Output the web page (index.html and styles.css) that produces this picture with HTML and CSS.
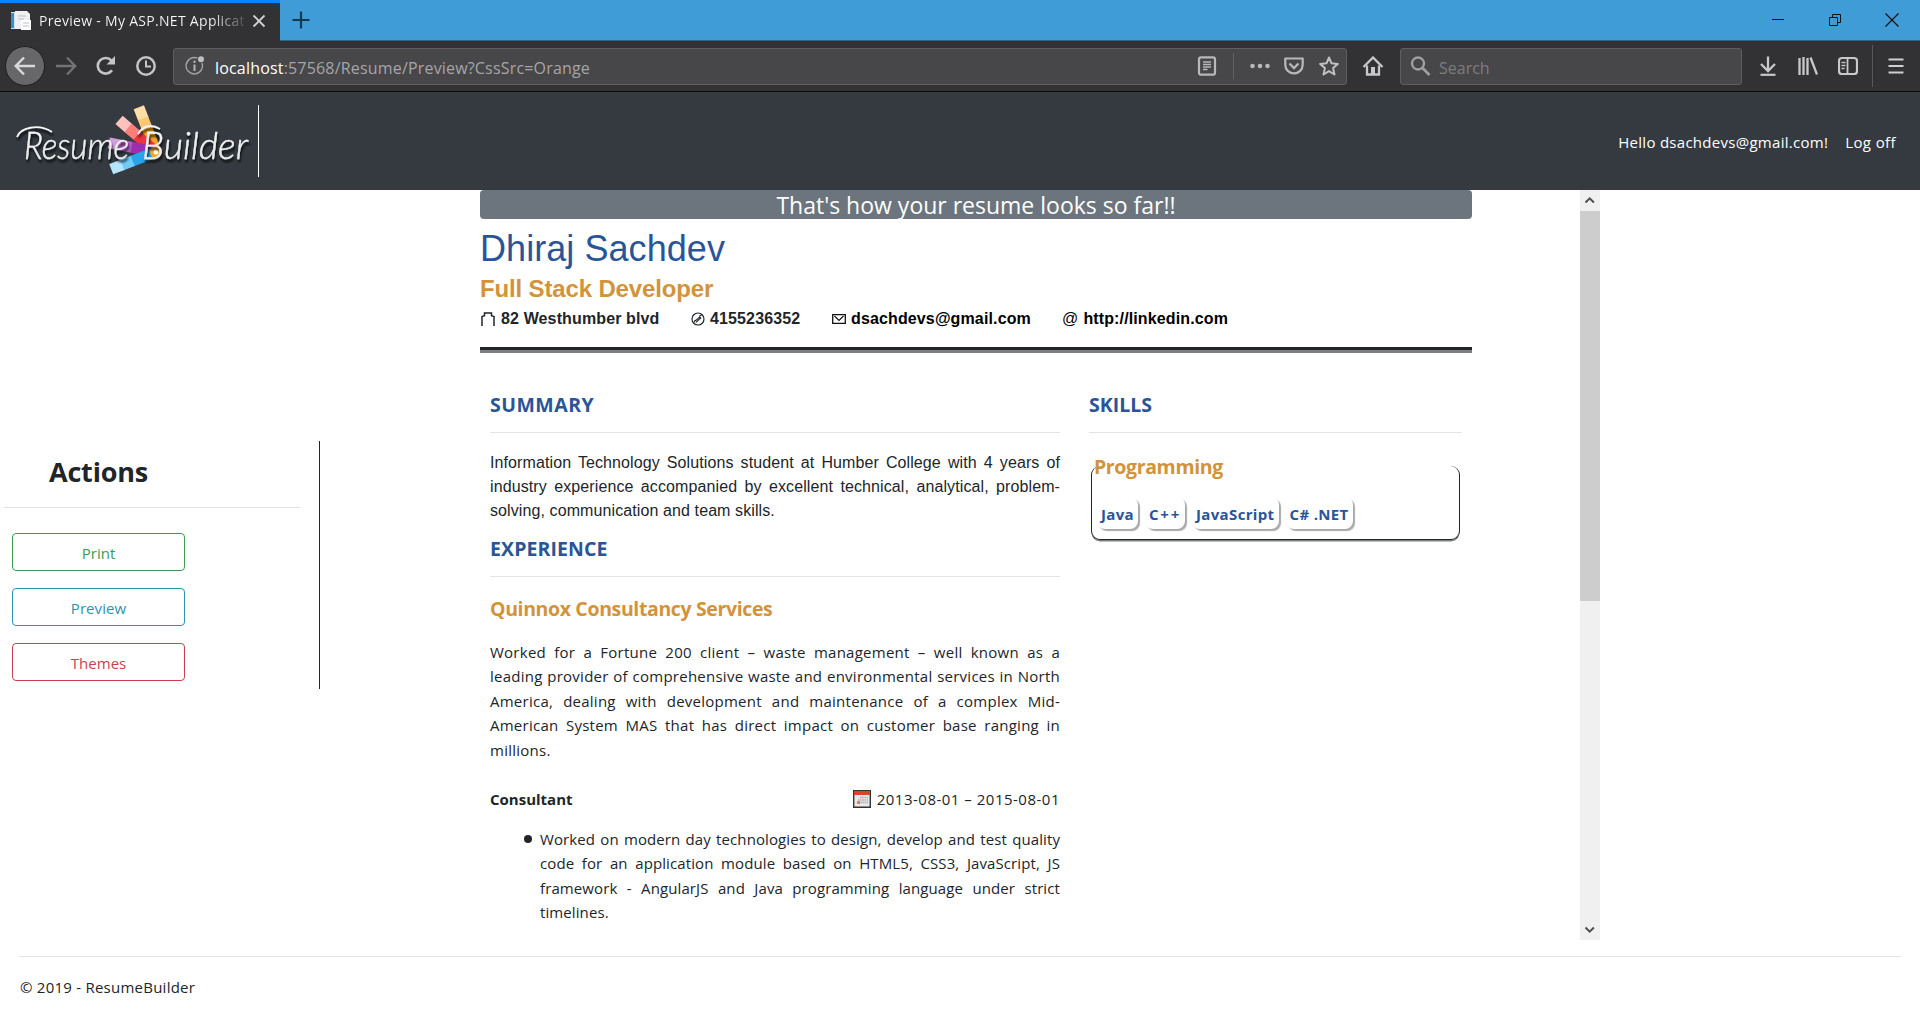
FILE: index.html
```html
<!DOCTYPE html>
<html lang="en">
<head>
<meta charset="utf-8">
<title>Preview - My ASP.NET Application</title>
<link rel="stylesheet" href="styles.css">
</head>
<body>
<header class="browser">
  <div class="titlebar">
    <div class="tab">
      <svg class="favicon" width="22" height="22" viewBox="0 0 22 22"><path d="M1 2h13v17H1z" fill="#cfe3f2"/><path d="M1 3h3v15H1z" fill="#3a8ec9"/><path d="M5 1h12l3 3v15H5z" fill="#eef0f1"/><path d="M11 10h10v10H11z" fill="#fff"/><path d="M8 6h8M8 9h6M13 13h6M13 16h6" stroke="#bcc3c8"/></svg>
      <span class="tab-title">Preview - My ASP.NET Applicat</span>
      <svg class="tab-close" width="14" height="14" viewBox="0 0 14 14"><path d="M1.500 1.500l11 11M12.500 1.500l-11 11" stroke="#d2d2d4" stroke-width="1.800"/></svg>
    </div>
    <svg class="newtab" width="18" height="18" viewBox="0 0 18 18"><path d="M9 .5v17M.5 9h17" stroke="#14384f" stroke-width="2.200"/></svg>
    <div class="window-buttons">
      <svg width="14" height="14" viewBox="0 0 14 14"><path d="M1 6.500h12" stroke="#111"/></svg>
      <svg width="14" height="14" viewBox="0 0 14 14"><path d="M1.500 4.500h8v8h-8zM4.500 4.500v-3h8v8h-3" fill="none" stroke="#111"/></svg>
      <svg width="14" height="14" viewBox="0 0 14 14"><path d="M.5 .5l13 13M13.500 .5l-13 13" stroke="#111" stroke-width="1.200"/></svg>
    </div>
  </div>
  <div class="toolbar">
    <span class="back"><svg width="22" height="20" viewBox="0 0 22 20"><path d="M21 10H2M10 1.500L1.800 10l8.200 8.500" fill="none" stroke="#d8d8da" stroke-width="2.500"/></svg></span>
    <svg class="fwd" width="22" height="20" viewBox="0 0 22 20"><path d="M1 10h19M12 1.500l8.200 8.500-8.200 8.500" fill="none" stroke="#737375" stroke-width="2.300"/></svg>
    <svg class="reload" width="22" height="20" viewBox="0 0 22 20"><path d="M17 14.200a7.800 7.800 0 1 1-.5-9.500" fill="none" stroke="#c4c4c6" stroke-width="2.600"/><path d="M20 0v8.500h-8.500z" fill="#c4c4c6"/></svg>
    <svg class="history" width="22" height="20" viewBox="0 0 22 20"><circle cx="11" cy="10" r="8.700" fill="none" stroke="#c4c4c6" stroke-width="2.500"/><path d="M11 4.500V10.500h5" fill="none" stroke="#c4c4c6" stroke-width="2"/></svg>
    <div class="field url">
      <svg class="info" width="20" height="20" viewBox="0 0 20 20"><path d="M12.500 2.200A8.200 8.200 0 1 0 17 7" fill="none" stroke="#a4a4a6" stroke-width="1.400"/><circle cx="16" cy="3.200" r="3" fill="#c0c0c2"/><path d="M9.500 8.500v6.500" stroke="#b4b4b6" stroke-width="2"/><circle cx="9.500" cy="5.800" r="1.200" fill="#b4b4b6"/></svg>
      <span class="address"><i>localhost</i>:57568/Resume/Preview?CssSrc=Orange</span>
      <svg class="reader" width="20" height="20" viewBox="0 0 20 20"><rect x="2" y="1.300" width="16" height="17.400" rx="2" fill="none" stroke="#b8b8ba" stroke-width="2.200"/><path d="M6 6h8M6 8.500h8M6 11h8M6 13.500h4.500" stroke="#b8b8ba" stroke-width="1.300"/></svg>
      <i class="divider"></i>
      <svg class="dots" width="20" height="20" viewBox="0 0 20 20"><circle cx="2.500" cy="10" r="2.300"/><circle cx="10" cy="10" r="2.300"/><circle cx="17.500" cy="10" r="2.300"/></svg>
      <svg class="pocket" width="20" height="20" viewBox="0 0 20 20"><path d="M1.300 2.500h17.400v6.200a8.700 8.700 0 0 1-17.400 0z" fill="none" stroke="#b8b8ba" stroke-width="2.200" stroke-linejoin="round"/><path d="M5.500 7.500l4.500 4.500 4.500-4.500" fill="none" stroke="#b8b8ba" stroke-width="2.300"/></svg>
      <svg class="star" width="20" height="20" viewBox="0 0 20 20"><path d="M10 1.500l2.500 5.800 6.300.6-4.700 4.200 1.400 6.400-5.500-3.400-5.500 3.400 1.400-6.400-4.700-4.200 6.300-.6z" fill="none" stroke="#c0c0c2" stroke-width="2" stroke-linejoin="round"/></svg>
    </div>
    <svg class="home" width="22" height="20" viewBox="0 0 22 20"><path d="M1.500 11L11 1.500l9.500 9.500" fill="none" stroke="#c8c8ca" stroke-width="2.300"/><path d="M5 9.500V18.500h12V9.500" fill="none" stroke="#c8c8ca" stroke-width="2.300"/><path d="M9 18v-7h4v7z" fill="#c8c8ca"/></svg>
    <div class="field search">
      <svg width="22" height="20" viewBox="0 0 22 20"><circle cx="8" cy="7.500" r="6" fill="none" stroke="#a0a0a2" stroke-width="2.300"/><path d="M12.500 12l7 7" stroke="#a0a0a2" stroke-width="2.600"/></svg>
      <span>Search</span>
    </div>
    <svg class="download" width="20" height="20" viewBox="0 0 20 20"><path d="M10 .5v14M3 8l7 7 7-7" fill="none" stroke="#c8c8ca" stroke-width="2.300"/><path d="M2.500 18.800h15" stroke="#c8c8ca" stroke-width="2.200"/></svg>
    <svg class="library" width="20" height="20" viewBox="0 0 20 20"><path d="M1.500 2v17M5.500 1v18M9.500 2v17M12.500 1.500l6.500 17" stroke="#c8c8ca" stroke-width="2.300"/></svg>
    <svg class="sidebar-icon" width="20" height="20" viewBox="0 0 20 20"><rect x="1" y="2" width="18" height="16" rx="3" fill="none" stroke="#c8c8ca" stroke-width="2.200"/><path d="M9.500 2v16" stroke="#c8c8ca" stroke-width="1.800"/><path d="M3.500 6.500h4M3.500 9.500h4M3.500 12.500h3" stroke="#c8c8ca" stroke-width="1.400"/></svg>
    <i class="tool-divider"></i>
    <svg class="menu" width="16" height="20" viewBox="0 0 16 20"><path d="M.5 3.500h15M.5 10h15M.5 16.500h15" stroke="#d0d0d2" stroke-width="2.200"/></svg>
  </div>
</header>

<nav class="navbar">
  <svg class="logo" width="258" height="72" viewBox="0 0 258 72">
    <defs>
      <linearGradient id="metal" x1="0" y1="0" x2="0" y2="1"><stop offset="0" stop-color="#fff"/><stop offset="1" stop-color="#dcdfe2"/></linearGradient>
      <filter id="drop" x="-10%" y="-20%" width="120%" height="150%"><feDropShadow dx="1" dy="3" stdDeviation="1.300" flood-color="#000" flood-opacity=".8"/></filter>
    </defs>
    <g transform="translate(156 47)">
      <g transform="rotate(-21)"><path d="M-5.500-48h11v13h-11z" fill="#ffdda6"/><path d="M-5.500-36h11v12h-11z" fill="#ffc673"/><path d="M-5.500-25h11V3h-11z" fill="#f5a623"/></g>
      <g transform="rotate(-49)"><path d="M-5.500-49h11v13h-11z" fill="#ffc2bd"/><path d="M-5.500-37h11v14h-11z" fill="#ff7f78"/><path d="M-5.500-25h11V0h-11z" fill="#ea3540"/></g>
      <g transform="rotate(-79)"><path d="M-5.500-48h11v13h-11z" fill="#cfa0dc"/><path d="M-5.500-36h11v12h-11z" fill="#b45bc6"/><path d="M-5.500-25h11V0h-11z" fill="#9b2fae"/></g>
      <g transform="rotate(-111)"><path d="M-5.500-48h11v13h-11z" fill="#b5e5ff"/><path d="M-5.500-36h11v12h-11z" fill="#6fcbfa"/><path d="M-5.500-25h11V0h-11z" fill="#29a4ea"/></g>
      <circle r="6" fill="#f5a623"/><circle r="2.500" fill="#fff"/>
    </g>
    <g filter="url(#drop)" fill="url(#metal)" stroke="#f4f5f6" stroke-width=".4">
      <text class="logo-text" x="24" y="54" textLength="105" lengthAdjust="spacingAndGlyphs">Resume</text>
      <text class="logo-text" x="142" y="54" textLength="106" lengthAdjust="spacingAndGlyphs">Builder</text>
      <path d="M17 32C20 23 38 18 52 27M138 29C143 20 152 19 160 24" fill="none" stroke-width="1.800"/>
    </g>
  </svg>
  <div class="account"><span class="hello">Hello dsachdevs@gmail.com!</span><span class="logoff">Log off</span></div>
</nav>

<main class="page">
  <aside class="actions">
    <h2>Actions</h2>
    <button class="print">Print</button>
    <button class="preview">Preview</button>
    <button class="themes">Themes</button>
  </aside>
  <section class="scroller">
    <article class="resume">
      <div class="banner">That's how your resume looks so far!!</div>
      <h1>Dhiraj Sachdev</h1>
      <h2 class="role">Full Stack Developer</h2>
      <div class="contact">
        <span class="c1"><svg width="16" height="14" viewBox="0 0 16 14"><path d="M2 14V4.500l2.500-.8V1h7v2.700l2.500.8V14" fill="none" stroke="#212529" stroke-width="1.500"/></svg><b>82 Westhumber blvd</b></span>
        <span class="c2"><svg width="14" height="14" viewBox="0 0 14 14"><circle cx="7" cy="7" r="6" fill="none" stroke="#212529" stroke-width="1.200"/><path d="M3.800 10.500c-.5-1.500 0-2.300 1-2.100L8.800 5c-.2-1.500.5-2 1.800-1.500M5 10.300L10.200 5.500" fill="none" stroke="#212529" stroke-width="1.100"/></svg><b>4155236352</b></span>
        <span class="c3"><svg width="14" height="10" viewBox="0 0 14 10"><path d="M.7.700h12.600v8.600H.7z" fill="none" stroke="#111" stroke-width="1.300"/><path d="M2.500 2L7 6.500 11.500 2" fill="none" stroke="#111" stroke-width="1.200"/></svg><b>dsachdevs@gmail.com</b></span>
        <span class="c4"><i>@</i><b>http://linkedin.com</b></span>
      </div>
      <div class="rule"></div>
      <div class="columns">
        <div class="left">
          <h3 class="sum">SUMMARY</h3>
          <p class="summary">Information Technology Solutions student at Humber College with 4 years of industry experience accompanied by excellent technical, analytical, problem-solving, communication and team skills.</p>
          <h3 class="exp">EXPERIENCE</h3>
          <h4>Quinnox Consultancy Services</h4>
          <p class="about">Worked for a Fortune 200 client – waste management – well known as a leading provider of comprehensive waste and environmental services in North America, dealing with development and maintenance of a complex Mid-American System MAS that has direct impact on customer base ranging in millions.</p>
          <div class="position">
            <strong>Consultant</strong>
            <span class="dates"><svg width="18" height="18" viewBox="0 0 18 18"><path d="M.7.700h16.600v16.600H.7z" fill="#e8e8e8" stroke="#333" stroke-width="1.400"/><path d="M1 1h16v4H1z" fill="#dc4326"/><path d="M7 7.500h8M5 10h10M5 12.500h10" stroke="#a8adb5" stroke-width="1.500" stroke-dasharray="1.500 .7"/><path d="M4 11h3v3H4z" fill="#e27a7a"/></svg>2013-08-01 – 2015-08-01</span>
          </div>
          <ul><li>Worked on modern day technologies to design, develop and test quality code for an application module based on HTML5, CSS3, JavaScript, JS framework - AngularJS and Java programming language under strict timelines.</li></ul>
        </div>
        <div class="right">
          <h3>SKILLS</h3>
          <div class="skillbox">
            <h4>Programming</h4>
            <div class="badges"><span>Java</span><span class="cpp">C++</span><span>JavaScript</span><span>C# .NET</span></div>
          </div>
        </div>
      </div>
    </article>
    <div class="scrollbar">
      <svg width="20" height="21" viewBox="0 0 20 21"><path d="M5.500 12.500l4.200-4.200 4.200 4.200" fill="none" stroke="#505050" stroke-width="2"/></svg>
      <div class="thumb"></div>
      <svg class="down" width="20" height="21" viewBox="0 0 20 21"><path d="M5.500 8.500l4.200 4.200 4.200-4.200" fill="none" stroke="#505050" stroke-width="2"/></svg>
    </div>
  </section>
</main>
<footer><p>© 2019 - ResumeBuilder</p></footer>
</body>
</html>
```
FILE: styles.css
```css
* { box-sizing: border-box; }
body { margin: 0; background: #fff; color: #212529; font: 15px/24px "Open Sans", sans-serif; }
b { font-weight: inherit; white-space: pre; }
i { font-style: normal; }
h1, h2, h3, h4, p, ul { margin: 0; padding: 0; }
svg { display: block; flex: none; }

.titlebar { display: flex; align-items: center; height: 41px; background: #409cd6; border-bottom: 1px solid #2d6487; }
.tab { display: flex; align-items: center; align-self: stretch; width: 280px; height: 41px; padding: 0 14px 2px 10px; background: #323234; border-top: 3px solid #0a84ff; }
.tab-title { width: 206px; margin-left: 7px; overflow: hidden; white-space: nowrap; font-size: 14px; letter-spacing: .3px; color: transparent; background: linear-gradient(90deg, #f9f9fa 84%, #4a4a4c 100%); -webkit-background-clip: text; background-clip: text; }
.tab-close { margin-left: 7px; }
.newtab { margin-left: 12px; }
.window-buttons { display: flex; gap: 43px; margin-left: auto; padding-right: 21px; }
.toolbar { display: flex; align-items: center; height: 51px; padding: 0 16px 0 5px; background: #323234; border-bottom: 1px solid #0c0c0d; }
.back { display: flex; align-items: center; justify-content: center; width: 40px; height: 40px; border-radius: 50%; background: #676769; border: 1px solid #1e1e20; }
.fwd { margin-left: 10px; }
.reload { margin-left: 18px; }
.history { margin-left: 18px; }
.field { display: flex; align-items: center; height: 37px; background: #474749; border: 1px solid #5e5e60; border-radius: 3px; }
.url { width: 1174px; margin-left: 16px; padding-left: 11px; }
.address { width: 400px; margin-left: 10px; padding-top: 4px; font-size: 16px; letter-spacing: .18px; color: #a5a5a7; }
.address i { color: #fff; }
.reader { margin-left: 582px; }
.divider { width: 1px; height: 26px; margin: 0 16px; background: #626264; }
.dots { fill: #b8b8ba; }
.pocket { margin-left: 14px; }
.star { margin-left: 15px; }
.home { margin-left: 15px; }
.search { width: 342px; margin-left: 16px; padding-left: 9px; }
.search span { margin-left: 7px; padding-top: 4px; font-size: 16px; color: #7d7d7f; }
.download { margin-left: 16px; }
.library, .sidebar-icon { margin-left: 20px; }
.tool-divider { width: 1px; height: 42px; margin: 0 15px 0 14px; background: #58585a; }

.navbar { display: flex; justify-content: space-between; height: 98px; padding: 13px 24px 0 0; background: #343a40; }
.logo { width: 259px; border-right: 1px solid #fff; overflow: visible; }
.logo-text { font: italic 300 38px Lato, sans-serif; }
.account { display: flex; gap: 17px; margin-top: 25px; color: #fff; }
.hello { letter-spacing: .28px; }
.logoff { letter-spacing: .4px; }

.page { display: flex; height: 750px; }
.actions { width: 320px; height: 248px; margin-top: 251px; padding-left: 4px; border-right: 1px solid #212529; }
.actions h2 { width: 296px; height: 67px; padding: 14px 0 0 45px; font-size: 27px; line-height: 34px; letter-spacing: -.2px; border-bottom: 1px solid #e2e2e2; }
.actions button { display: block; width: 173px; height: 38px; margin: 0 0 17px 8px; padding: 1px 0 0; font: 15px/24px "Open Sans", sans-serif; letter-spacing: .05px; background: #fff; border: 1px solid; border-radius: 4px; }
.actions h2 + button { margin-top: 25px; }
.actions .print { color: #3a9c52; }
.actions .preview { color: #2e95a9; }
.actions .themes { color: #c8424f; }

.scroller { display: flex; justify-content: space-between; width: 1120px; margin-left: 160px; }
.resume { width: 992px; }
.banner { height: 29px; background: #6c757d; border-radius: 4px; color: #fff; font-size: 23px; line-height: 31px; text-align: center; }
h1 { margin-top: 8px; font: 36px/44px "Liberation Sans", sans-serif; letter-spacing: .06px; color: #295598; }
.role { margin-top: 3px; font: bold 24px/30px "Liberation Sans", sans-serif; letter-spacing: -.15px; color: #d2933a; }
.contact { display: flex; margin-top: 3px; font: bold 16px/24px "Liberation Sans", sans-serif; letter-spacing: .13px; }
.contact span { display: flex; align-items: center; }
.contact b { margin-left: 5px; }
.c1 { width: 211px; }
.c2 { width: 141px; }
.c3 { width: 230px; color: #000; }
.c4 { color: #000; }
.c4 i { font-weight: normal; }
.rule { height: 6px; margin-top: 16px; background: linear-gradient(#212529 50%, #7f7f7f 50%); }
.columns { display: flex; justify-content: space-between; margin-top: 39px; padding: 0 10px; }
.left { width: 570px; }
.right { width: 373px; }
h3 { height: 41px; padding-top: 1px; border-bottom: 1px solid #e3e3e3; font-size: 19.500px; line-height: 24px; color: #295598; }
.sum { letter-spacing: .5px; }
h4 { font-size: 19.500px; line-height: 24px; letter-spacing: -.37px; color: #d2933a; }
.summary { margin-top: 18px; font: 16px/24px "Liberation Sans", sans-serif; letter-spacing: .1px; text-align: justify; }
.exp { margin-top: 13px; letter-spacing: .1px; }
.left h4 { margin-top: 20px; }
.about { margin-top: 19px; line-height: 24.400px; letter-spacing: .25px; text-align: justify; }
.position { display: flex; justify-content: space-between; margin-top: 25px; }
.dates { display: flex; align-items: center; gap: 6px; letter-spacing: .5px; }
ul { margin-top: 16px; padding-left: 50px; line-height: 24.400px; letter-spacing: .1px; text-align: justify; list-style: none; }
li::before { content: ""; float: left; width: 8px; height: 8px; margin: 8px 0 0 -16px; border-radius: 50%; background: #212529; }
.skillbox { height: 74px; margin: 33px 2px 0; border: 1px solid #212529; border-top: 0; border-radius: 9px; box-shadow: 0 2px 0 -0.500px #7f7f7f; padding-left: 5px; }
.skillbox h4 { position: relative; top: -11px; margin-left: -3px; }
.badges { display: flex; gap: 7px; margin-top: 7px; font-weight: bold; letter-spacing: .35px; color: #295598; }
.badges span { height: 32px; padding: 5px 4px 3px; border-radius: 8px; box-shadow: 2px 2px 1px #a9a9a9; }
.badges .cpp { letter-spacing: 1.750px; }
.scrollbar { display: flex; flex-direction: column; width: 20px; background: #f0f0f0; }
.thumb { height: 390px; background: #cdcdcd; }
.down { margin-top: auto; }

footer { margin: 16px 19px 0; padding: 18px 1px 0; border-top: 1px solid #e3e3e3; letter-spacing: .24px; }
```
